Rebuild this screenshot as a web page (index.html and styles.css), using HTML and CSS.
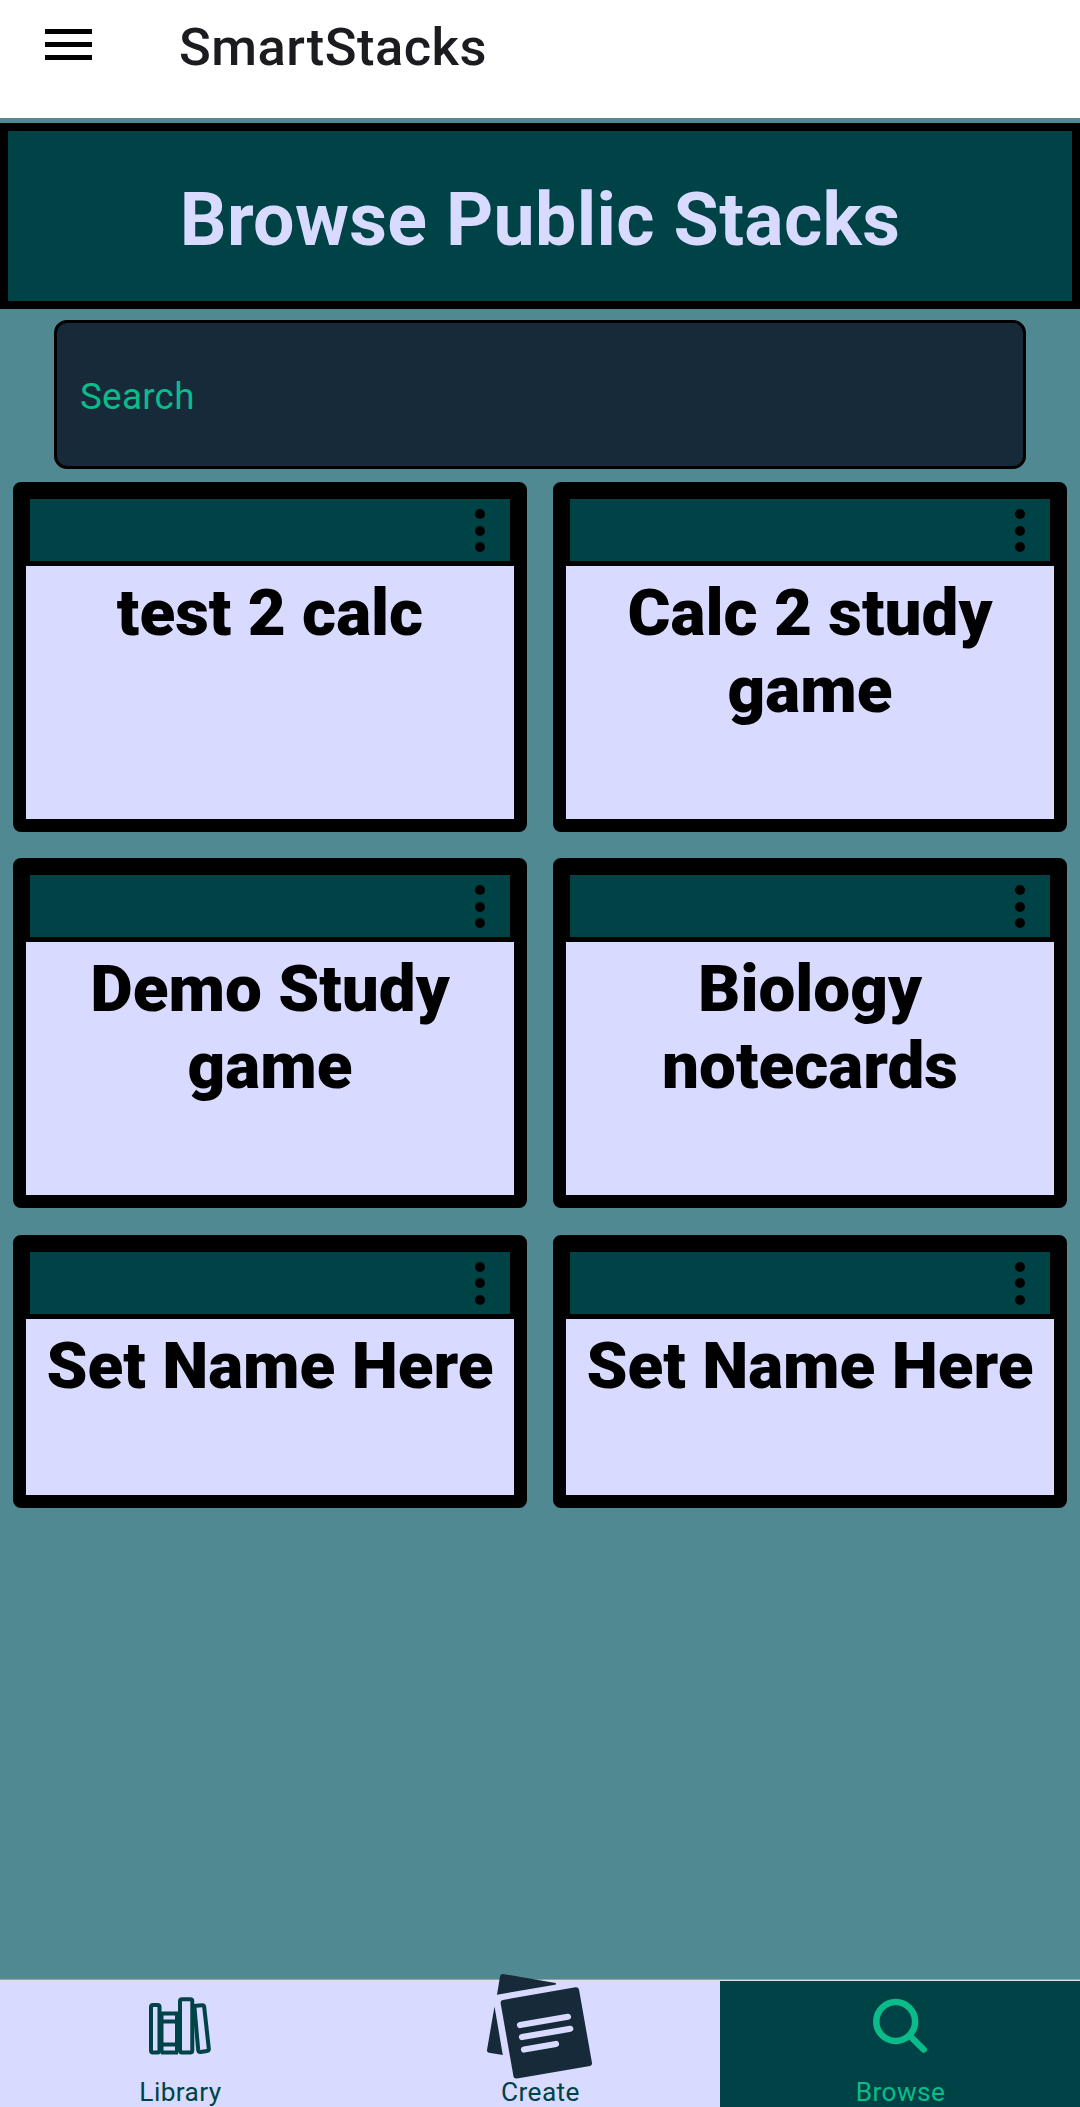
FILE: index.html
```html
<!DOCTYPE html>
<html lang="en">
<head>
<meta charset="utf-8">
<title>SmartStacks</title>
<link rel="stylesheet" href="styles.css">
</head>
<body>
<header class="appbar">
  <svg class="menu" width="48" height="36" viewBox="0 0 48 36"><path d="M0 3.5h47M0 16.5h47M0 29.5h47" stroke="#000" stroke-width="5"/></svg>
  <span class="app-name">SmartStacks</span>
</header>
<main class="content">
  <h1 class="banner">Browse Public Stacks</h1>
  <div class="search">Search</div>
  <section class="grid">
    <article class="card"><div class="card-bar"><i class="dot"></i><i class="dot"></i><i class="dot"></i></div><h2 class="card-name">test 2 calc</h2></article>
    <article class="card"><div class="card-bar"><i class="dot"></i><i class="dot"></i><i class="dot"></i></div><h2 class="card-name">Calc 2 study<br>game</h2></article>
    <article class="card"><div class="card-bar"><i class="dot"></i><i class="dot"></i><i class="dot"></i></div><h2 class="card-name">Demo Study<br>game</h2></article>
    <article class="card"><div class="card-bar"><i class="dot"></i><i class="dot"></i><i class="dot"></i></div><h2 class="card-name">Biology<br>notecards</h2></article>
    <article class="card"><div class="card-bar"><i class="dot"></i><i class="dot"></i><i class="dot"></i></div><h2 class="card-name">Set Name Here</h2></article>
    <article class="card"><div class="card-bar"><i class="dot"></i><i class="dot"></i><i class="dot"></i></div><h2 class="card-name">Set Name Here</h2></article>
  </section>
</main>
<nav class="tabs">
  <a class="tab">
    <svg class="tab-icon" width="64" height="60" viewBox="148 1996 64 60" fill="none" stroke="#004346" stroke-width="4" stroke-linejoin="round">
      <rect x="151" y="2005" width="8.5" height="47.500" rx="2"/>
      <path d="M160 2013.500h18M160 2021.500h18M160 2044.500h18M161 2052.500h17M161.500 2013v39M177 2013v39"/>
      <rect x="180" y="1999.200" width="12.300" height="53.300" rx="2"/>
      <path d="M194.500 2007.500Q194.400 2006 196 2005.800L202 2005.200Q204 2005 204.200 2007L208.800 2048.500Q209 2050.800 207 2051L200.500 2052Q198.500 2052.200 198.200 2050Z"/>
    </svg>
    <span class="tab-label">Library</span>
  </a>
  <a class="tab">
    <svg class="tab-icon create-icon" width="108" height="108" viewBox="486 1973 108 108">
      <g fill="#172a3a">
        <path d="M500 1976.500Q500.400 1973.700 503 1974L555.500 1983Q557 1984.500 555 1984.800L497 1994.700Z"/>
        <path d="M494.500 2006.500L502.800 2055L489 2052.800Q486.700 2052.200 487 2050Z"/>
        <path d="M500.600 2003Q500.300 2000.500 503 2000L575.500 1987.300Q578.300 1987 579 1989.500L592 2063Q592.300 2065.500 590 2066L517 2078.500Q514 2079 513.500 2076.500Z"/>
      </g>
      <path d="M520 2025L568 2016.800M522 2037L570.300 2028.800M524 2049.500L556 2044" stroke="#d8dbff" stroke-width="6.200" stroke-linecap="round"/>
    </svg>
    <span class="tab-label">Create</span>
  </a>
  <a class="tab active">
    <svg class="tab-icon search-icon" width="56" height="56" viewBox="872 1998 56 56" fill="none" stroke="#09bc8a" stroke-width="6.500" stroke-linecap="round"><circle cx="895.700" cy="2021.500" r="19.400"/><path d="M910 2036L923.700 2049.500"/></svg>
    <span class="tab-label">Browse</span>
  </a>
</nav>
</body>
</html>
```
FILE: styles.css
```css
* { box-sizing: border-box; }
body {
  margin: 0;
  width: 1080px;
  height: 2107px;
  overflow: hidden;
  display: flex;
  flex-direction: column;
  background: #508991;
  font-family: Roboto, sans-serif;
}
.appbar {
  height: 118px;
  flex: none;
  display: flex;
  align-items: flex-start;
  background: #fff;
}
.menu { margin: 28px 0 0 45px; }
.app-name {
  margin: 16px 0 0 86px;
  font-size: 52.5px;
  font-weight: 500;
  letter-spacing: 0.5px;
  line-height: 62px;
  color: #1c1b1f;
}
.content { flex: 1; padding-top: 5px; }
.banner {
  margin: 0;
  height: 186px;
  border: 8px solid #000;
  background: #004346;
  color: #d8dbff;
  font-size: 73.5px;
  font-weight: 700;
  letter-spacing: 0.33px;
  line-height: 178px;
  text-align: center;
}
.search {
  margin: 11px 54px 0;
  height: 149px;
  padding-left: 23px;
  border: 3px solid #000;
  border-radius: 13px;
  background: #172a3a;
  color: #09bc8a;
  font-size: 36.75px;
  letter-spacing: 0.3px;
  line-height: 147px;
}
.grid {
  margin: 13px 13px 0;
  display: grid;
  grid-template-columns: 1fr 1fr;
  grid-template-rows: 350px 350px 273px;
  gap: 26.3px 26px;
}
.card {
  display: flex;
  flex-direction: column;
  border: 13px solid #000;
  border-radius: 8px;
  background: #d8dbff;
}
.card-bar {
  height: 71px;
  flex: none;
  border: solid #000;
  border-width: 4px 4px 5px;
  padding: 10px 25.5px 0 0;
  display: flex;
  flex-direction: column;
  align-items: flex-end;
  gap: 6.5px;
  background: #004346;
}
.dot { width: 10px; height: 10px; border-radius: 50%; background: #000; }
.card-name {
  margin: 8px 0 0;
  font-size: 65.625px;
  font-weight: 900;
  line-height: 77px;
  text-align: center;
  color: #000;
}
.tabs {
  height: 127px;
  flex: none;
  display: grid;
  grid-template-columns: 1fr 1fr 1fr;
  border-top: 1px solid #e0e0e0;
  box-shadow: 0 -1px 0 #8fa5a8;
  background: #d8dbff;
}
.tab {
  display: flex;
  flex-direction: column;
  align-items: center;
  justify-content: flex-end;
  position: relative;
  color: #004346;
}
.tab-icon { margin-bottom: 21px; }
.search-icon { margin-bottom: 23px; }
.create-icon { position: absolute; left: 126px; top: -8px; margin: 0; }
.tab-label {
  position: relative;
  margin-bottom: -1px;
  padding-left: 1px;
  font-size: 26.25px;
  letter-spacing: 0.4px;
  line-height: 31px;
}
.active { background: #004346; color: #09bc8a; }
```
